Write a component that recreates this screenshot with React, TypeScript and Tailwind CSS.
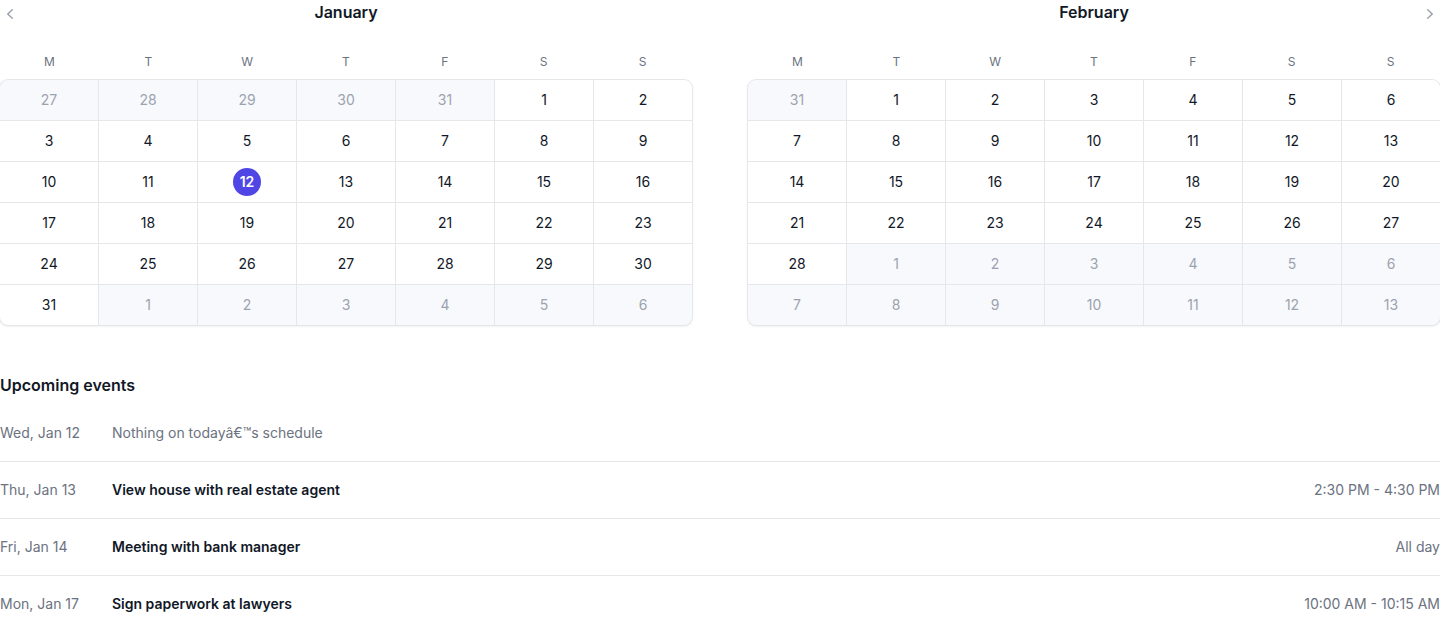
import React from 'react';

type Day = { date: string; day: number; current: boolean; selected?: boolean };

function buildMonth(prevTail: number[], count: number, nextHead: number, monthKey: string, selected?: number): Day[] {
  const days: Day[] = [];
  prevTail.forEach((d) => days.push({ date: `prev-${d}`, day: d, current: false }));
  for (let d = 1; d <= count; d++) {
    days.push({ date: `${monthKey}-${d}`, day: d, current: true, selected: d === selected });
  }
  for (let d = 1; d <= nextHead; d++) days.push({ date: `next-${d}`, day: d, current: false });
  return days;
}

const months = [
  { name: 'January', days: buildMonth([27, 28, 29, 30, 31], 31, 6, 'jan', 12) },
  { name: 'February', days: buildMonth([31], 28, 13, 'feb') },
];

const events = [
  { date: 'Wed, Jan 12', title: 'Nothing on todayâ€™s schedule', time: '', empty: true },
  { date: 'Thu, Jan 13', title: 'View house with real estate agent', time: '2:30 PM - 4:30 PM' },
  { date: 'Fri, Jan 14', title: 'Meeting with bank manager', time: 'All day' },
  { date: 'Mon, Jan 17', title: 'Sign paperwork at lawyers', time: '10:00 AM - 10:15 AM' },
];

const weekdays = ['M', 'T', 'W', 'T', 'F', 'S', 'S'];

function ChevronLeft() {
  return (
    <svg viewBox="0 0 20 20" fill="currentColor" className="h-5 w-5">
      <path
        fillRule="evenodd"
        d="M12.79 5.23a.75.75 0 01-.02 1.06L8.832 10l3.938 3.71a.75.75 0 11-1.04 1.08l-4.5-4.25a.75.75 0 010-1.08l4.5-4.25a.75.75 0 011.06.02z"
        clipRule="evenodd"
      />
    </svg>
  );
}

function ChevronRight() {
  return (
    <svg viewBox="0 0 20 20" fill="currentColor" className="h-5 w-5">
      <path
        fillRule="evenodd"
        d="M7.21 14.77a.75.75 0 01.02-1.06L11.168 10 7.23 6.29a.75.75 0 111.04-1.08l4.5 4.25a.75.75 0 010 1.08l-4.5 4.25a.75.75 0 01-1.06-.02z"
        clipRule="evenodd"
      />
    </svg>
  );
}

function Month({ name, days, side }: { name: string; days: Day[]; side: 'left' | 'right' }) {
  return (
    <section className="relative text-center">
      {side === 'left' ? (
        <button type="button" className="absolute -top-0.5 -left-1.5 flex items-center justify-center p-1.5 text-[#9ca3af]">
          <ChevronLeft />
        </button>
      ) : (
        <button type="button" className="absolute -top-0.5 -right-1.5 flex items-center justify-center p-1.5 text-[#9ca3af]">
          <ChevronRight />
        </button>
      )}
      <h2 className="text-base leading-6 font-semibold text-[#111827]">{name}</h2>
      <div className="mt-[26px] grid grid-cols-7 text-xs leading-6 text-[#6b7280]">
        {weekdays.map((w, i) => (
          <div key={i}>{w}</div>
        ))}
      </div>
      <div className="isolate mt-1.5 grid grid-cols-7 gap-px rounded-lg bg-[#e5e7eb] text-sm shadow-sm ring-1 ring-[#e5e7eb]">
        {days.map((d, i) => (
          <div
            key={d.date}
            className={[
              'py-1.5',
              d.current ? 'bg-white text-[#111827]' : 'bg-[#f7f9fc] text-[#9ca3af]',
              i === 0 ? 'rounded-tl-lg' : '',
              i === 6 ? 'rounded-tr-lg' : '',
              i === days.length - 7 ? 'rounded-bl-lg' : '',
              i === days.length - 1 ? 'rounded-br-lg' : '',
            ].join(' ')}
          >
            <span
              className={
                d.selected
                  ? 'mx-auto flex h-7 w-7 items-center justify-center rounded-full bg-[#4f46e5] font-semibold text-white'
                  : 'mx-auto flex h-7 w-7 items-center justify-center rounded-full'
              }
            >
              {d.day}
            </span>
          </div>
        ))}
      </div>
    </section>
  );
}

export default function App() {
  return (
    <div className="min-h-screen bg-white font-['Inter',_'Liberation_Sans',_sans-serif]">
      <div className="grid grid-cols-2 gap-x-14">
        <Month name={months[0].name} days={months[0].days} side="left" />
        <Month name={months[1].name} days={months[1].days} side="right" />
      </div>
      <section className="mt-12">
        <h2 className="text-base leading-6 font-semibold text-[#111827]">Upcoming events</h2>
        <ol className="mt-2 divide-y divide-[#e5e7eb] text-sm leading-6 text-[#6b7280]">
          {events.map((e) => (
            <li key={e.date} className="flex py-4">
              <time className="w-28 flex-none">{e.date}</time>
              <p className={e.empty ? 'flex-auto' : 'flex-auto font-semibold text-[#111827]'}>{e.title}</p>
              {e.time && <p className="ml-6 flex-none">{e.time}</p>}
            </li>
          ))}
        </ol>
      </section>
    </div>
  );
}
